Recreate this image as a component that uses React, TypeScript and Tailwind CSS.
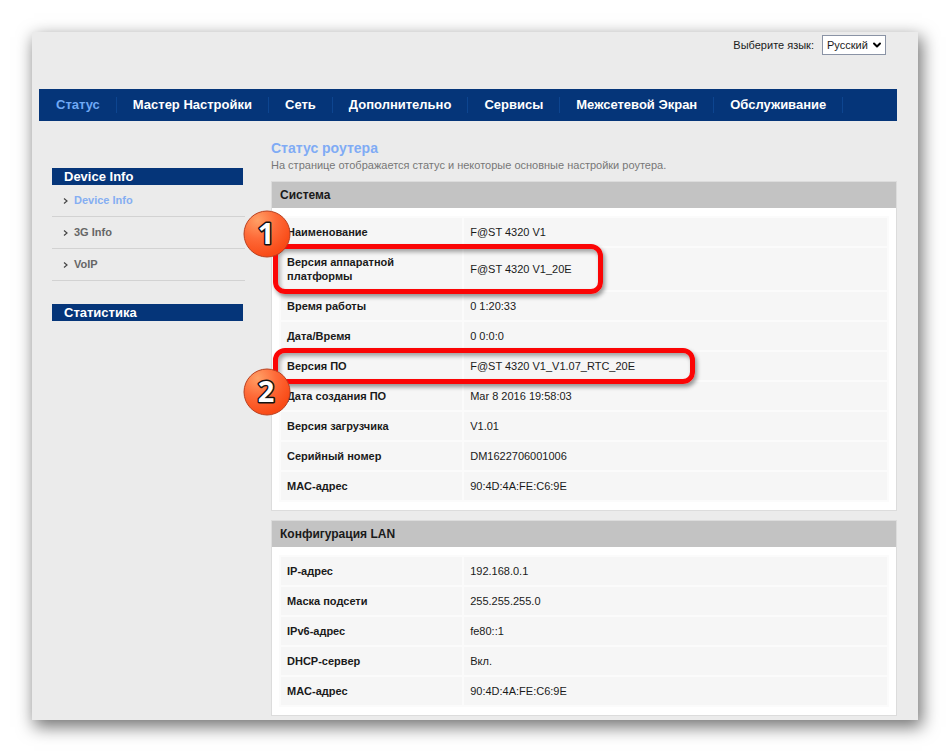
import type { ReactNode } from "react";
import { ChevronDown } from "lucide-react";
import { clsx } from "clsx";

type Callout = {
  number: number;
  box: string;
  badge: string;
};

type Row = {
  label: string;
  value: string;
  callout?: Callout;
};

const navItems = [
  "Статус",
  "Мастер Настройки",
  "Сеть",
  "Дополнительно",
  "Сервисы",
  "Межсетевой Экран",
  "Обслуживание",
];

const sideItems = ["Device Info", "3G Info", "VoIP"];

const systemRows: Row[] = [
  { label: "Наименование", value: "F@ST 4320 V1" },
  {
    label: "Версия аппаратной платформы",
    value: "F@ST 4320 V1_20E",
    callout: {
      number: 1,
      box: "w-[330px]",
      badge: "-top-[38px]",
    },
  },
  { label: "Время работы", value: "0 1:20:33" },
  { label: "Дата/Время", value: "0 0:0:0" },
  {
    label: "Версия ПО",
    value: "F@ST 4320 V1_V1.07_RTC_20E",
    callout: {
      number: 2,
      box: "w-[422px]",
      badge: "top-4",
    },
  },
  { label: "Дата создания ПО", value: "Mar 8 2016 19:58:03" },
  { label: "Версия загрузчика", value: "V1.01" },
  { label: "Серийный номер", value: "DM1622706001006" },
  { label: "MAC-адрес", value: "90:4D:4A:FE:C6:9E" },
];

const lanRows: Row[] = [
  { label: "IP-адрес", value: "192.168.0.1" },
  { label: "Маска подсети", value: "255.255.255.0" },
  { label: "IPv6-адрес", value: "fe80::1" },
  { label: "DHCP-сервер", value: "Вкл." },
  { label: "MAC-адрес", value: "90:4D:4A:FE:C6:9E" },
];

const Badge = ({ number }: { number: number }) => (
  <svg viewBox="0 0 48 48" className="size-12">
    <defs>
      <radialGradient id={`badge-${number}`} cx="0.3" cy="0.2" r="0.8">
        <stop offset="0" stopColor="#ffa066" />
        <stop offset="0.5" stopColor="#fe6a38" />
        <stop offset="1" stopColor="#f94a16" />
      </radialGradient>
    </defs>
    <circle
      cx="24"
      cy="24"
      r="23"
      fill={`url(#badge-${number})`}
      stroke="#b8401f"
      strokeWidth="1"
    />
    <text
      x="23"
      y="34"
      textAnchor="middle"
      fontFamily="'Noto Sans', sans-serif"
      fontSize="29"
      fontWeight="700"
      fill="#fff"
      stroke="#111"
      strokeWidth="3"
      strokeLinejoin="round"
      paintOrder="stroke"
    >
      {number}
    </text>
  </svg>
);

const CalloutMark = ({ callout }: { callout: Callout }) => (
  <>
    <span
      className={clsx(
        "pointer-events-none absolute -top-1 -bottom-1 -left-2 z-10 rounded-xl border-[5px] border-[#fb0505] shadow-[2px_3px_4px_rgba(0,0,0,0.4),inset_2px_3px_4px_rgba(0,0,0,0.35)]",
        callout.box,
      )}
    />
    <span
      className={clsx(
        "pointer-events-none absolute -left-[38px] z-20",
        callout.badge,
      )}
    >
      <Badge number={callout.number} />
    </span>
  </>
);

const Panel = ({ title, rows }: { title: string; rows: Row[] }) => (
  <section className="border border-[#dcdcdc] bg-white">
    <h2 className="bg-[#c3c3c3] px-2 py-1 text-[12px] leading-[18px] font-bold">
      {title}
    </h2>
    <div className="px-[7px] py-2">
      <table className="w-full border-separate border-spacing-[2px] bg-[#fbfbfb] text-left text-[11px] leading-[14px]">
        <tbody>
          {rows.map((row) => (
            <tr key={row.label}>
              <th
                scope="row"
                className="relative w-[30%] bg-[#f6f6f6] py-[7px] pr-12 pl-[6px] font-bold"
              >
                {row.label}
                {row.callout && <CalloutMark callout={row.callout} />}
              </th>
              <td className="bg-[#f6f6f6] px-[6px] py-[7px]">{row.value}</td>
            </tr>
          ))}
        </tbody>
      </table>
    </div>
  </section>
);

const SideTitle = ({ children }: { children: ReactNode }) => (
  <h2 className="mr-[2px] bg-[#053579] px-3 text-[13px] leading-[17px] font-bold text-white">
    {children}
  </h2>
);

const App = () => (
  <div className="min-h-screen bg-white p-8 font-['Liberation_Sans',Arial,sans-serif] text-[#1a1a1a]">
    <div className="bg-[#ebebeb] pr-[21px] pb-1 pl-[7px] shadow-[3px_6px_16px_1px_rgba(0,0,0,0.55)]">
      <header>
        <div className="flex items-center justify-end gap-2 pt-[3px] pr-[11px] pb-[34px] text-[11px]">
          <label htmlFor="language">Выберите язык:</label>
          <div className="relative">
            <select
              id="language"
              defaultValue="ru"
              className="h-5 w-16 appearance-none border border-[#8a93a5] bg-white pl-1 text-[11px]"
            >
              <option value="ru">Русский</option>
              <option value="en">English</option>
            </select>
            <ChevronDown
              strokeWidth={4}
              className="pointer-events-none absolute top-1 right-[3px] size-3 text-black"
            />
          </div>
        </div>
        <nav className="flex h-8 items-center bg-[#053579] pl-px">
          {navItems.map((item, i) => (
            <a
              key={item}
              href="#"
              className={clsx(
                "border-r border-[#0d4590] px-4 text-[13px] leading-4 font-bold whitespace-nowrap",
                i === 0 ? "text-[#6fa8f5]" : "text-white",
              )}
            >
              {item}
            </a>
          ))}
        </nav>
      </header>

      <div className="flex">
        <aside className="w-[206px] shrink-0 pt-[47px] pl-[13px]">
          <SideTitle>Device Info</SideTitle>
          <ul className="mb-[23px]">
            {sideItems.map((item, i) => (
              <li key={item} className="border-b border-[#d2d2d2]">
                <a
                  href="#"
                  className={clsx(
                    "flex h-[31px] items-center gap-[6px] pl-[11px] text-[11px] font-bold",
                    i === 0 ? "text-[#85aef2]" : "text-[#666]",
                  )}
                >
                  <svg viewBox="0 0 5 6" className="h-[6px] w-[5px]">
                    <path
                      d="M1 0.5 L4 3 L1 5.5"
                      fill="none"
                      stroke="#444"
                      strokeWidth="1.2"
                    />
                  </svg>
                  {item}
                </a>
              </li>
            ))}
          </ul>
          <SideTitle>Статистика</SideTitle>
        </aside>

        <main className="ml-[26px] min-w-0 flex-1 pt-[18px]">
          <h1 className="text-[14px] leading-[18px] font-bold text-[#80abf5]">
            Статус роутера
          </h1>
          <p className="mb-2 text-[11px] leading-4 text-[#777]">
            На странице отображается статус и некоторые основные настройки
            роутера.
          </p>
          <div className="flex flex-col gap-[9px]">
            <Panel title="Система" rows={systemRows} />
            <Panel title="Конфигурация LAN" rows={lanRows} />
          </div>
        </main>
      </div>
    </div>
  </div>
);

export default App;
